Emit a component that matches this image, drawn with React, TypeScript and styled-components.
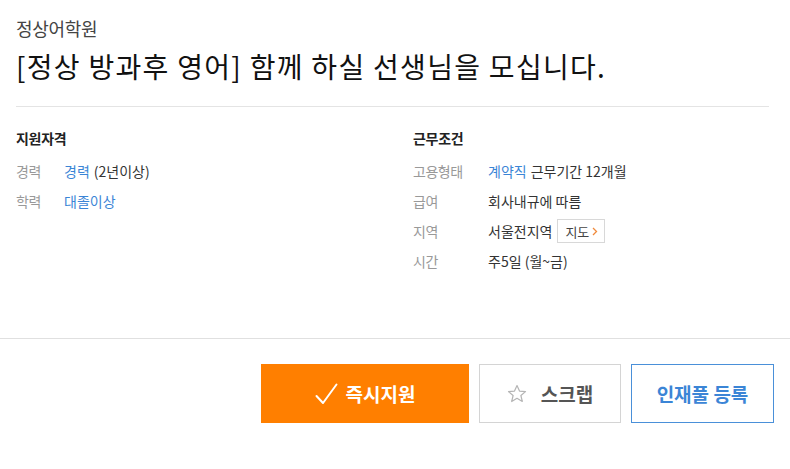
import styled, { createGlobalStyle } from "styled-components";

const GlobalStyle = createGlobalStyle`
  body {
    margin: 0;
    background: #fff;
    font-family: "Noto Sans CJK KR", "Noto Sans", sans-serif;
    color: #333;
  }
`;

const Page = styled.div`
  width: 790px;
  height: 469px;
  overflow: hidden;
  background: #fff;
`;

const Header = styled.header`
  margin: 0 21px 0 16px;
  padding-top: 15px;
  height: 91px;
  border-bottom: 1px solid #e4e4e4;
`;

const Company = styled.div`
  font-size: 18px;
  line-height: 26px;
  color: #444;
  letter-spacing: -0.3px;
`;

const Title = styled.h1`
  margin: 6px 0 0;
  font-size: 28px;
  line-height: 38px;
  font-weight: 400;
  color: #111;
  letter-spacing: 1.3px;
`;

const Info = styled.div`
  display: grid;
  grid-template-columns: 397px 1fr;
  padding: 20px 16px 0;
  height: 211px;
  border-bottom: 1px solid #e0e0e0;
`;

const Section = styled.section``;

const SectionTitle = styled.h2`
  margin: 0 0 7px;
  font-size: 14px;
  line-height: 22px;
  font-weight: 700;
  color: #222;
  letter-spacing: -0.3px;
`;

const Row = styled.div<{ $labelWidth: number }>`
  display: grid;
  grid-template-columns: ${(p) => p.$labelWidth}px 1fr;
  align-items: center;
  height: 30px;
  font-size: 14px;
`;

const Label = styled.span`
  color: #999;
  letter-spacing: -0.5px;
`;

const Value = styled.span`
  color: #333;
  display: flex;
  align-items: center;
  gap: 4px;
`;

const LinkText = styled.span`
  color: #3b85d6;
`;

const MapButton = styled.span`
  display: inline-flex;
  align-items: center;
  gap: 3px;
  height: 22px;
  padding: 0 6px 0 7px;
  margin-left: 1px;
  border: 1px solid #d8d8d8;
  font-size: 13px;
  color: #444;
`;

const Actions = styled.div`
  display: flex;
  justify-content: flex-end;
  gap: 10px;
  padding: 25px 16px 0;
`;

const Button = styled.button<{ $variant: "apply" | "scrap" | "pool"; $width: number }>`
  display: flex;
  align-items: center;
  justify-content: center;
  gap: ${(p) => (p.$variant === "scrap" ? 14 : 8)}px;
  width: ${(p) => p.$width}px;
  height: 59px;
  padding: 0;
  font-family: inherit;
  font-size: 19px;
  font-weight: 700;
  cursor: pointer;
  background: ${(p) => (p.$variant === "apply" ? "#ff7f00" : "#fff")};
  color: ${(p) =>
    p.$variant === "apply" ? "#fff" : p.$variant === "pool" ? "#3b85d6" : "#555"};
  border: 1px solid
    ${(p) =>
      p.$variant === "apply" ? "#ff7f00" : p.$variant === "pool" ? "#4a90d9" : "#d4d4d4"};
`;

function CheckIcon() {
  return (
    <svg width="23" height="22" viewBox="0 0 23 22" fill="none">
      <path d="M1.5 13 L8 20 L21.5 1.5" stroke="#fff" strokeWidth="2" strokeLinecap="round" strokeLinejoin="round" />
    </svg>
  );
}

function StarIcon() {
  return (
    <svg width="20" height="20" viewBox="0 0 20 20" fill="none">
      <path
        d="M10 1.5 L12.5 7.1 L18.5 7.6 L13.9 11.5 L15.3 17.5 L10 14.3 L4.7 17.5 L6.1 11.5 L1.5 7.6 L7.5 7.1 Z"
        stroke="#b5b5b5"
        strokeWidth="1.2"
        strokeLinejoin="round"
      />
    </svg>
  );
}

function ChevronIcon() {
  return (
    <svg width="6" height="9" viewBox="0 0 6 9" fill="none">
      <path d="M1 1 L4.5 4.5 L1 8" stroke="#f08a3c" strokeWidth="1.3" />
    </svg>
  );
}

export default function App() {
  return (
    <Page>
      <GlobalStyle />
      <Header>
        <Company>정상어학원</Company>
        <Title>[정상 방과후 영어] 함께 하실 선생님을 모십니다.</Title>
      </Header>
      <Info>
        <Section>
          <SectionTitle>지원자격</SectionTitle>
          <Row $labelWidth={48}>
            <Label>경력</Label>
            <Value>
              <LinkText>경력</LinkText> (2년이상)
            </Value>
          </Row>
          <Row $labelWidth={48}>
            <Label>학력</Label>
            <Value>
              <LinkText>대졸이상</LinkText>
            </Value>
          </Row>
        </Section>
        <Section>
          <SectionTitle>근무조건</SectionTitle>
          <Row $labelWidth={75}>
            <Label>고용형태</Label>
            <Value>
              <LinkText>계약직</LinkText> 근무기간 12개월
            </Value>
          </Row>
          <Row $labelWidth={75}>
            <Label>급여</Label>
            <Value>회사내규에 따름</Value>
          </Row>
          <Row $labelWidth={75}>
            <Label>지역</Label>
            <Value>
              서울전지역
              <MapButton>
                지도 <ChevronIcon />
              </MapButton>
            </Value>
          </Row>
          <Row $labelWidth={75}>
            <Label>시간</Label>
            <Value>주5일 (월~금)</Value>
          </Row>
        </Section>
      </Info>
      <Actions>
        <Button $variant="apply" $width={208}>
          <CheckIcon />
          즉시지원
        </Button>
        <Button $variant="scrap" $width={142}>
          <StarIcon />
          스크랩
        </Button>
        <Button $variant="pool" $width={143}>
          인재풀 등록
        </Button>
      </Actions>
    </Page>
  );
}
